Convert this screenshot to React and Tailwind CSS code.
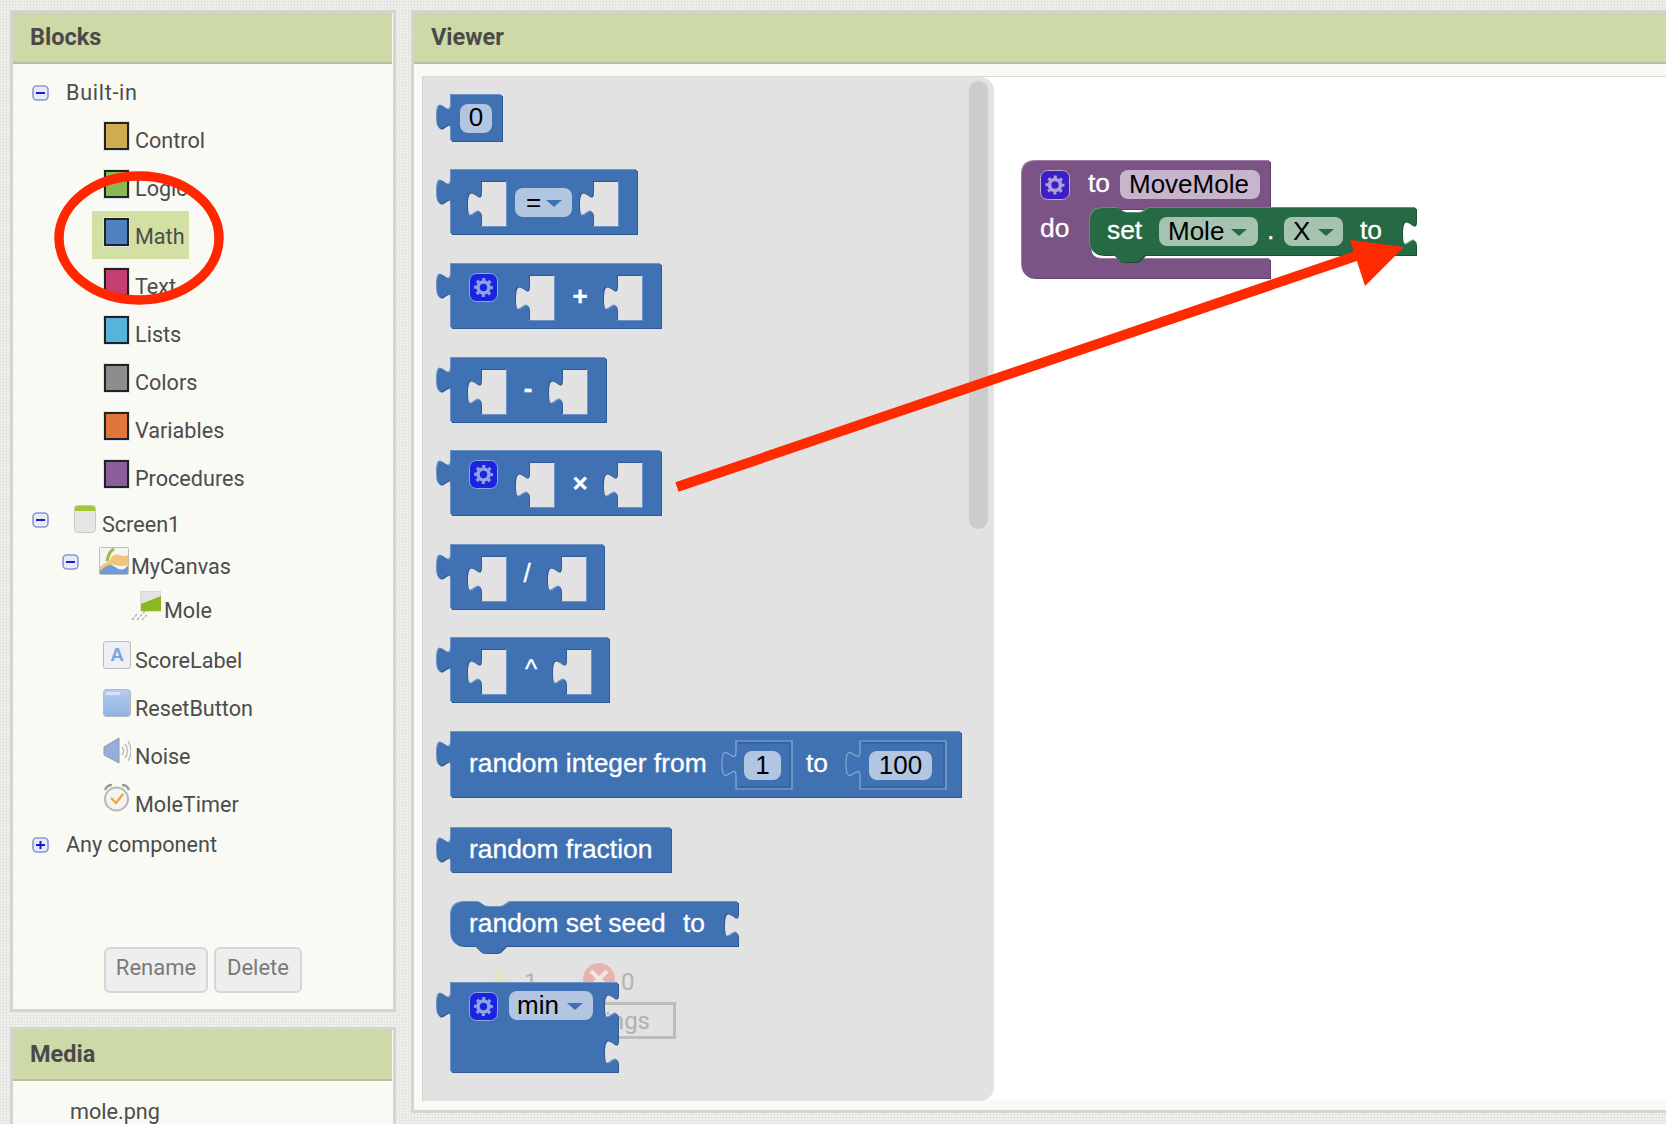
import React from "react";

const BLUE = { main: "#3f71b3", dark: "#2f5a92", light: "#6c92c6" };
const PURPLE = { main: "#7c5385", dark: "#623f6b", light: "#a07fa8" };
const GREEN = { main: "#266a45", dark: "#1b5234", light: "#5d9074" };

const tabUp = "c 0,-17.5 -14,14 -14,-13 s 14,4.4 14,-13";
const tabDown = "c 0,17.5 -14,-14 -14,13 s 14,-4.4 14,13";

// socket for a value input, x is the left side of the tab
const hole = (x, right, top = 11, bot = 57) => {
  const neck = x + 14;
  return `M${neck},${top} H${right} V${bot} H${neck} V${top + 36} ${tabUp} V${top} Z`;
};

const valuePath = (w, h) => `M15,0 H${w} V${h} H15 V35 ${tabUp} V0 Z`;

const statementPath = (w, h, socketTop) =>
  `M0,14 Q0,0 14,0 H28 l6,4 q2,1 4,1 h11 q2,0 4,-1 l6,-4 H${w} V${socketTop} ${tabDown} V${h} H55 l-6,6 q-2,1 -4,1 h-11 q-2,0 -4,-1 l-6,-6 H14 Q0,${h} 0,${h - 14} Z`;

const Shape = ({ d, c = BLUE }) => (
  <>
    <path d={d} fill={c.dark} fillRule="evenodd" transform="translate(1,1)" />
    <path d={d} fill={c.light} fillRule="evenodd" transform="translate(-1,-1)" />
    <path d={d} fill={c.main} fillRule="evenodd" />
  </>
);

const Label = ({ x, y, children, fill = "#fff", size, weight, anchor = "start" }) => (
  <text
    x={x}
    y={y}
    fill={fill}
    stroke={fill === "#fff" ? "#fff" : "none"}
    strokeWidth={0.3}
    fontSize={size || (fill === "#fff" ? 26.4 : 26)}
    fontWeight={weight}
    textAnchor={anchor}
    fontFamily="'Liberation Sans', sans-serif"
  >
    {children}
  </text>
);

const Chip = ({ x, y, w, h = 29, fill = "#b2c6e2", text, textX, anchor, drop, dropX, arrow = "#3f71b3" }) => (
  <>
    <rect x={x} y={y} width={w} height={h} rx={8} fill={fill} />
    <Label x={textX} y={y + 23} fill="#000" anchor={anchor}>{text}</Label>
    {drop && <path d={`M${dropX},${y + 12} h16 l-8,7 Z`} fill={arrow} />}
  </>
);

const Gear = ({ x, y, s = 29, bg = "#1a24e0", edge = "#8fa8dd", gear = "#8da3e4" }) => {
  const cx = x + s / 2;
  const cy = y + s / 2;
  return (
    <>
      <rect x={x + 0.5} y={y + 0.5} width={s - 1} height={s - 1} rx={7} fill={bg} stroke={edge} />
      <circle cx={cx} cy={cy} r={5.5} fill="none" stroke={gear} strokeWidth={3.6} />
      <circle cx={cx} cy={cy} r={8} fill="none" stroke={gear} strokeWidth={3} strokeDasharray="3.1 3.18" strokeDashoffset="1.5" />
    </>
  );
};

const Block = ({ w, h, className = "", children }) => (
  <svg width={w + 2} height={h} className={`relative block shrink-0 overflow-visible ${className}`}>
    {children}
  </svg>
);

const MathBlock = ({ w, holes, sign, signX, signY, weight, gear, className }) => (
  <Block w={w} h={64} className={className}>
    <Shape d={`${valuePath(w, 64)} ${holes.map(([a, b]) => hole(a, b)).join(" ")}`} />
    {gear && <Gear x={33} y={9} />}
    <Label x={signX} y={signY} anchor="middle" size={26} weight={weight}>{sign}</Label>
  </Block>
);

const InnerNumber = ({ x, right, chipX, chipW, text }) => (
  <>
    <path d={hole(x, right, 9, 57)} fill="none" stroke="#8aa8d2" strokeWidth={1.2} />
    <path d={`M${x + 16},11 H${right - 2} V55 H${x + 16}`} fill="none" stroke="#2f5a92" strokeWidth={1} />
    <Chip x={chipX} y={19} w={chipW} text={text} textX={chipX + chipW / 2} anchor="middle" />
  </>
);

// faded warning counter that shows through under the flyout
const Ghost = () => (
  <div className="absolute top-[888px] left-[66px] h-[76px] w-[190px] font-['Roboto',sans-serif] text-[24px] text-[#b4b4b4]">
    <svg width="24" height="22" className="absolute top-[1px] left-0">
      <path d="M12,0 L24,22 H0 Z" fill="#e4e3c8" />
    </svg>
    <span className="absolute top-[-1px] left-[35px]">1</span>
    <svg width="32" height="32" className="absolute top-[-2px] left-[94px]">
      <circle cx="16" cy="16" r="16" fill="#e6b4b0" />
      <path d="M8,8 L24,24 M24,8 L8,24" stroke="#f2e4e2" strokeWidth="4" />
    </svg>
    <span className="absolute top-[-1px] left-[132px]">0</span>
    <div className="absolute top-[37px] left-0 flex h-[37px] w-[187px] items-center justify-end border-[3px] border-[#bdbdbd] pr-[23px] text-[#b0b0b0]">
      <span className="whitespace-nowrap">Warnings</span>
    </div>
  </div>
);

const Flyout = () => (
  <div className="relative flex h-[1024px] w-[572px] shrink-0 flex-col gap-[29px] rounded-r-[14px] border-l border-[#d0d0d0] bg-[#e2e2e2] pt-[18px] pl-[13px]">
    <div className="absolute top-[4px] left-[546px] h-[448px] w-[19px] rounded-full bg-[#cccccc]" />
    <Ghost />
    <Block w={66} h={46}>
      <Shape d={valuePath(66, 46)} />
      <rect x={24} y={9} width={32} height={29} rx={8} fill="#b2c6e2" />
      <Label x={40} y={31} fill="#000" anchor="middle">0</Label>
    </Block>
    <Block w={201} h={64}>
      <Shape d={`${valuePath(201, 64)} ${hole(31, 71)} ${hole(143, 183)}`} />
      <rect x={79} y={18} width={57} height={29} rx={8} fill="#b2c6e2" />
      <Label x={90} y={41} fill="#000">=</Label>
      <path d="M110,30 h16 l-8,7 Z" fill="#3f71b3" />
    </Block>
    <MathBlock w={225} holes={[[79, 119], [167, 207]]} sign="+" signX={144} signY={41} weight="bold" gear className="mt-[1px]" />
    <MathBlock w={170} holes={[[31, 71], [112, 152]]} sign="-" signX={92} signY={39} weight="bold" className="mt-[1px]" />
    <MathBlock w={225} holes={[[79, 119], [167, 207]]} sign="×" signX={144} signY={41} weight="bold" gear />
    <MathBlock w={168} holes={[[31, 71], [111, 151]]} sign="/" signX={91} signY={37} className="mt-[1px]" />
    <MathBlock w={173} holes={[[31, 71], [116, 156]]} sign="^" signX={95} signY={40} />
    <Block w={525} h={65} className="mt-[1px]">
      <Shape d={valuePath(525, 65)} />
      <Label x={33} y={40}>random integer from</Label>
      <InnerNumber x={286} right={356} chipX={308} chipW={37} text="1" />
      <Label x={370} y={40}>to</Label>
      <InnerNumber x={410} right={510} chipX={433} chipW={63} text="100" />
    </Block>
    <Block w={235} h={44} className="mt-[2px]">
      <Shape d={valuePath(235, 44)} />
      <Label x={33} y={30}>random fraction</Label>
    </Block>
    <Block w={287} h={44} className="mt-[1px] ml-[15px]">
      <Shape d={statementPath(287, 44, 10)} />
      <Label x={18} y={30}>random set seed</Label>
      <Label x={232} y={30}>to</Label>
    </Block>
    <Block w={182} h={89} className="mt-[8px]">
      <Shape d={`M15,0 H182 V10 ${tabDown} V56 ${tabDown} V89 H15 V35 ${tabUp} V0 Z`} />
      <Gear x={33} y={9} />
      <Chip x={73} y={8} w={84} text="min" textX={81} drop dropX={131} />
    </Block>
  </div>
);

const WorkspaceBlocks = () => (
  <svg width="400" height="130" className="mt-[84px] ml-[28px] block shrink-0 overflow-visible">
    <Shape
      c={PURPLE}
      d="M14,0 H248 V48 H82 Q68,48 68,62 V84 Q68,98 82,98 H248 V117 H14 Q0,117 0,103 V14 Q0,0 14,0 Z"
    />
    <Gear x={18} y={9} s={30} bg="#3a20c4" edge="#c0aecb" gear="#b09fdc" />
    <Label x={66} y={31}>to</Label>
    <Chip x={98} y={9} w={140} fill="#c6b5cc" text="MoveMole" textX={107} />
    <Label x={18} y={76}>do</Label>
    <g transform="translate(68,47)">
      <Shape c={GREEN} d={statementPath(326, 47, 12)} />
      <Label x={17} y={31}>set</Label>
      <Chip x={69} y={9} w={99} fill="#a6c2b0" text="Mole" textX={78} drop dropX={141} arrow="#266a45" />
      <Label x={177} y={31}>.</Label>
      <Chip x={194} y={9} w={59} fill="#a6c2b0" text="X" textX={203} drop dropX={228} arrow="#266a45" />
      <Label x={270} y={31}>to</Label>
    </g>
  </svg>
);

const Toggle = ({ plus }) => (
  <svg width="17" height="16" className="shrink-0">
    <rect x="1" y="1" width="15" height="14" rx="4" fill="#e8ebf6" stroke="#8a94d8" strokeWidth="1.6" />
    <path d={plus ? "M4,8 H13 M8.5,4 V12" : "M4,8 H13"} stroke="#1a1ad0" strokeWidth="2" />
  </svg>
);

const Swatch = ({ color }) => (
  <div className={`h-[28px] w-[25px] shrink-0 -translate-y-[5px] border-[2px] border-[#222] ${color} outline-1 outline-[#dde3ee]`} />
);

const ScreenIcon = () => (
  <svg width="22" height="28" className="shrink-0 -translate-y-[6px]">
    <rect x="0.5" y="0.5" width="21" height="27" rx="3" fill="#e6e6e6" stroke="#c8c8c8" />
    <path d="M1,6 V4 Q1,1 4,1 H18 Q21,1 21,4 V6 Z" fill="#a4c639" />
  </svg>
);

const CanvasIcon = () => (
  <svg width="30" height="28" className="shrink-0 -translate-y-[6px]">
    <rect x="0.5" y="0.5" width="29" height="27" rx="1" fill="#f4f4f4" stroke="#bbb" />
    <path d="M1,27 V20 Q8,14 16,20 T29,18 V27 Z" fill="#6d9bd6" />
    <path d="M1,20 Q6,16 10,14 Q14,6 20,8 T29,8 V18 Q22,20 16,18 T1,24 Z" fill="#f3c57c" />
    <path d="M8,14 Q10,4 15,2" fill="none" stroke="#9dbb4a" strokeWidth="3" />
  </svg>
);

const SpriteIcon = () => (
  <svg width="30" height="30" className="shrink-0 -translate-y-[5px]">
    <rect x="10" y="0" width="20" height="20" fill="#e4e4e4" stroke="#ccc" />
    <path d="M10,20 V13 L30,5 V20 Z" fill="#8cb81f" />
    <path d="M1,29 L7,22 M6,29 L14,20 M11,29 L16,24" stroke="#b0b0b0" strokeWidth="1.4" strokeDasharray="3 1.5" />
  </svg>
);

const LabelIcon = () => (
  <div className="flex h-[28px] w-[28px] shrink-0 -translate-y-[6px] items-center justify-center rounded-[3px] border border-[#bbb] bg-[#eeeff3] font-['Liberation_Sans',sans-serif] text-[19px] font-bold text-[#7fa3dc]">
    A
  </div>
);

const ButtonIcon = () => (
  <svg width="28" height="28" className="shrink-0 -translate-y-[6px]">
    <defs>
      <linearGradient id="btn" x1="0" y1="0" x2="0" y2="1">
        <stop offset="0" stopColor="#b5cdf0" />
        <stop offset="1" stopColor="#8fb2e4" />
      </linearGradient>
    </defs>
    <rect x="0.5" y="0.5" width="27" height="27" rx="3" fill="url(#btn)" stroke="#b8b8b8" />
    <rect x="3" y="3" width="14" height="3" fill="#d9e6f8" />
  </svg>
);

const SpeakerIcon = () => (
  <svg width="28" height="28" className="shrink-0 -translate-y-[6px]">
    <path d="M1,10 L16,1 V26 L1,18 Z" fill="#8fb0e0" stroke="#999" />
    <path d="M19,10 Q22,14 19,18 M22,7 Q27,14 22,21 M25,4 Q31,14 25,24" fill="none" stroke="#bbb" strokeWidth="1.4" />
  </svg>
);

const ClockIcon = () => (
  <svg width="28" height="30" className="shrink-0 -translate-y-[7px]">
    <path d="M2,7 Q4,2 9,2 M19,2 Q24,2 26,7" fill="none" stroke="#999" strokeWidth="2.5" />
    <circle cx="13.5" cy="16" r="11.5" fill="#f4f4f4" stroke="#b8b8b8" strokeWidth="2" />
    <path d="M8,15 L13,20 L20,11" fill="none" stroke="#eba93a" strokeWidth="2.4" />
  </svg>
);

const categories = [
  ["Control", "bg-[#cfac4f]", "mt-[8px]"],
  ["Logic", "bg-[#8ab854]", "mt-[8px]"],
  ["Math", "bg-[#4f81c0]", "mt-[8px]"],
  ["Text", "bg-[#c23f6f]", "mt-[10px]"],
  ["Lists", "bg-[#58b3dc]", "mt-[8px]"],
  ["Colors", "bg-[#8d8d8d]", "mt-[8px]"],
  ["Variables", "bg-[#e0763a]", "mt-[8px]"],
  ["Procedures", "bg-[#8a5f99]", "mt-[8px]"],
];

const components = [
  ["ScoreLabel", LabelIcon, "mt-[10px]"],
  ["ResetButton", ButtonIcon, "mt-[8px]"],
  ["Noise", SpeakerIcon, "mt-[8px]"],
  ["MoleTimer", ClockIcon, "mt-[8px]"],
];

const Tree = () => (
  <div className="flex flex-col pt-[9px]">
    <div className="flex h-10 items-center pl-[19px]">
      <Toggle />
      <span className="ml-[17px] tracking-[0.7px]">Built-in</span>
    </div>
    {categories.map(([name, color, gap]) =>
      name === "Math" ? (
        <div key={name} className={`flex h-10 items-center pl-[79px] ${gap}`}>
          <div className="flex h-[48px] w-[97px] -translate-y-[2px] items-center gap-[6px] bg-[#d3e0a3] pt-[4px] pl-[12px]">
            <Swatch color={color} />
            <span>{name}</span>
          </div>
        </div>
      ) : (
        <div key={name} className={`flex h-10 items-center gap-[6px] pl-[91px] ${gap}`}>
          <Swatch color={color} />
          <span>{name}</span>
        </div>
      )
    )}
    <div className="mt-[6px] flex h-10 items-center pl-[19px]">
      <div className="-translate-y-[5px]"><Toggle /></div>
      <div className="ml-[25px]"><ScreenIcon /></div>
      <span className="ml-[6px]">Screen1</span>
    </div>
    <div className="mt-[2px] flex h-10 items-center pl-[49px]">
      <div className="-translate-y-[5px]"><Toggle /></div>
      <div className="ml-[20px]"><CanvasIcon /></div>
      <span className="ml-[2px]">MyCanvas</span>
    </div>
    <div className="mt-[4px] flex h-10 items-center gap-[3px] pl-[118px]">
      <SpriteIcon />
      <span>Mole</span>
    </div>
    {components.map(([name, Icon, gap]) => (
      <div key={name} className={`flex h-10 items-center pl-[90px] ${gap}`}>
        <div className="flex w-[32px] shrink-0"><Icon /></div>
        <span>{name}</span>
      </div>
    ))}
    <div className="flex h-10 items-center pl-[19px]">
      <Toggle plus />
      <span className="ml-[17px]">Any component</span>
    </div>
  </div>
);

const PanelHeader = ({ children }) => (
  <div className="mr-[1px] flex h-[51px] shrink-0 items-center border-b-[2px] border-[#b9bda8] bg-[#cddaa7] pl-[17px] text-[23.5px] font-bold text-[#4a4a4a]">
    {children}
  </div>
);

const Button = ({ children, className }) => (
  <button className={`flex h-[46px] items-center justify-center rounded-[6px] border-[2px] border-[#d6d6d6] bg-[#eeeeee] pb-[5px] text-[22px] text-[#7a7a7a] ${className}`}>
    {children}
  </button>
);

const App = () => (
  <div className="relative flex h-[1124px] w-[1666px] gap-[15px] overflow-hidden bg-[#ededea] bg-[repeating-linear-gradient(0deg,#e5e5e1_0px,#e5e5e1_1px,transparent_1px,transparent_3px),repeating-linear-gradient(90deg,#e5e5e1_0px,#e5e5e1_1px,#f0f0ec_1px,#f0f0ec_3px)] pt-[10px] pl-[10px] font-['Roboto',sans-serif] text-[21.6px] text-[#4c4c4c]">
    <div className="flex w-[386px] shrink-0 flex-col gap-[15px]">
      <div className="flex h-[1002px] shrink-0 flex-col border-[3px] border-[#d4d4d2] bg-[#f9faf4]">
        <PanelHeader>Blocks</PanelHeader>
        <Tree />
        <div className="mt-[82px] flex gap-[6px] pl-[91px]">
          <Button className="w-[104px]">Rename</Button>
          <Button className="w-[88px]">Delete</Button>
        </div>
      </div>
      <div className="h-[200px] shrink-0 border-[3px] border-[#d4d4d2] bg-[#f9faf4]">
        <PanelHeader>Media</PanelHeader>
        <div className="pt-[15px] pl-[57px]">mole.png</div>
      </div>
    </div>
    <div className="flex h-[1103px] flex-1 flex-col border-[3px] border-r-0 border-[#d4d4d2] bg-[#f9faf4]">
      <div className="-mr-[2px]">
        <PanelHeader>Viewer</PanelHeader>
      </div>
      <div className="px-[8px] pt-[12px]">
        <div className="flex h-[1024px] w-[1300px] border-t border-[#d8d8d8] bg-white">
          <Flyout />
          <WorkspaceBlocks />
        </div>
      </div>
    </div>
    {/* red annotations drawn over the screenshot */}
    <svg width="1666" height="1124" className="pointer-events-none absolute inset-0">
      <ellipse cx="139" cy="238" rx="80" ry="62" fill="none" stroke="#ff2600" strokeWidth="9.5" />
      <path d="M677,487 L1362,254" stroke="#ff2a00" strokeWidth="10" />
      <path d="M1404,247 L1350,240 L1365,286 Z" fill="#ff2a00" />
    </svg>
  </div>
);

export default App;
